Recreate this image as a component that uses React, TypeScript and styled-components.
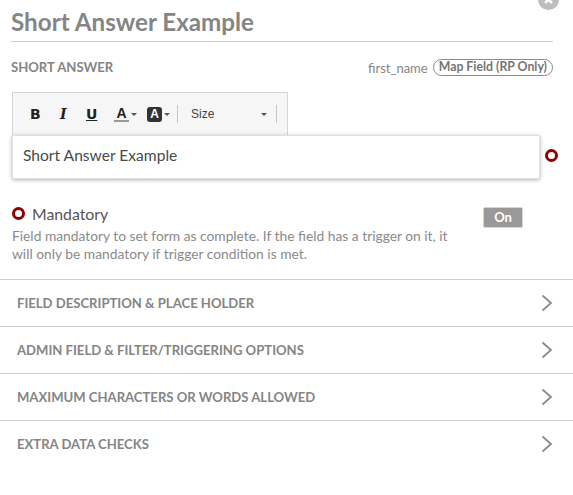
import React from "react";
import styled, { createGlobalStyle } from "styled-components";

const Global = createGlobalStyle`
  html, body { margin: 0; padding: 0; background: #fff; }
  body { font-family: Lato, "Liberation Sans", sans-serif; width: 573px; height: 495px; overflow: hidden; }
`;
const Page = styled.div`
  position: relative;
  width: 573px;
  height: 495px;
  overflow: hidden;
  background: #fff;
`;
const Close = styled.div`
  position: absolute;
  left: 538px;
  top: -11px;
  width: 21px;
  height: 21px;
  border-radius: 50%;
  background: #bdbdbd;
  display: flex;
  align-items: center;
  justify-content: center;
`;
const Header = styled.div`
  margin: 0 20px 0 11px;
  height: 42px;
  box-sizing: border-box;
  border-bottom: 1px solid #d0d0d0;
  display: flex;
  align-items: flex-start;
`;
const Title = styled.h1`
  margin: 0;
  padding-top: 7px;
  font-size: 24.2px;
  line-height: 30px;
  font-weight: 700;
  color: #858585;
`;
const MetaRow = styled.div`
  margin: 0 20px 0 11px;
  height: 50px;
  display: flex;
  align-items: center;
  justify-content: space-between;
`;
const TypeLabel = styled.span`
  font-size: 13.1px;
  font-weight: 700;
  color: #858585;
`;
const MapGroup = styled.div`
  display: flex;
  align-items: center;
  gap: 5px;
`;
const FieldName = styled.span`
  font-size: 13px;
  color: #858585;
  position: relative;
  top: 1px;
`;
const Pill = styled.span`
  height: 17px;
  line-height: 14px;
  box-sizing: border-box;
  padding: 0 5px;
  border: 1px solid #8a8a8a;
  border-radius: 9px;
  font-size: 12.3px;
  font-weight: 700;
  color: #757575;
`;
const Toolbar = styled.div`
  box-sizing: border-box;
  margin-left: 12px;
  width: 276px;
  height: 43px;
  background: #f6f6f6;
  border: 1px solid #d4d4d4;
  border-bottom: 0;
  display: flex;
  align-items: center;
  padding-left: 17px;
  font-family: "Liberation Sans", Arial, sans-serif;
`;
const ToolButton = styled.span<{ $w: number }>`
  width: ${(p) => p.$w}px;
  display: flex;
  align-items: center;
  color: #222;
`;
const Glyph = styled.span<{ $italic?: boolean; $underline?: boolean }>`
  font-family: "DejaVu Sans", sans-serif;
  font-size: 14px;
  font-weight: 700;
  line-height: 18px;
  font-style: ${(p) => (p.$italic ? "italic" : "normal")};
  text-decoration: ${(p) => (p.$underline ? "underline" : "none")};
`;
const ItalicGlyph = styled(Glyph)`
  position: relative;
  left: 2px;
  font-family: "DejaVu Serif", serif;
`;
const ColorA = styled.span`
  font-size: 14px;
  font-weight: 700;
  line-height: 14px;
  width: 15px;
  text-align: center;
  border-bottom: 2px solid #999;
  color: #222;
`;
const BackA = styled.span`
  width: 15px;
  height: 15px;
  background: #333;
  border-radius: 3px;
  color: #fff;
  font-size: 12px;
  font-weight: 700;
  line-height: 15px;
  text-align: center;
`;
const Caret = styled.span`
  width: 0;
  height: 0;
  margin-left: 2px;
  border-left: 3px solid transparent;
  border-right: 3px solid transparent;
  border-top: 3px solid #555;
`;
const Sep = styled.span`
  width: 1px;
  height: 18px;
  background: #c8c8c8;
`;
const SizeSelect = styled.span`
  box-sizing: border-box;
  width: 98px;
  padding: 0 9px 0 13px;
  display: flex;
  align-items: center;
  justify-content: space-between;
  font-size: 12px;
  color: #444;
`;
const InputRow = styled.div`
  margin-left: 12px;
  display: flex;
  align-items: flex-start;
  gap: 5px;
`;
const Input = styled.div`
  box-sizing: border-box;
  width: 528px;
  height: 44px;
  padding: 0 0 5px 10px;
  display: flex;
  align-items: center;
  background: #fff;
  border: 1px solid #e0e0e0;
  box-shadow: 0 1px 4px rgba(0, 0, 0, 0.3);
  font-size: 15.6px;
  color: #4a4a4a;
`;
const Radio = styled.span`
  box-sizing: border-box;
  flex: none;
  width: 13px;
  height: 13px;
  border-radius: 50%;
  border: 3px solid #8b0000;
  background: #fff;
`;
const InputRadio = styled(Radio)`
  margin-top: 14px;
`;
const MandatoryBlock = styled.div`
  margin: 23px 0 0 12px;
  height: 77px;
  width: 511px;
`;
const MandatoryHead = styled.div`
  height: 22px;
  display: flex;
  align-items: center;
  gap: 7px;
`;
const MandatoryLabel = styled.span`
  flex: 1;
  font-size: 15.8px;
  color: #555;
`;
const Toggle = styled.span`
  box-sizing: border-box;
  width: 40px;
  height: 21px;
  border-radius: 2px;
  border: 1px solid #d4d4d4;
  background: #999;
  color: #fff;
  font-size: 13px;
  font-weight: 700;
  line-height: 19px;
  text-align: center;
  position: relative;
  top: 4px;
`;
const Help = styled.p`
  margin: 3px 0 0;
  width: 450px;
  font-size: 13.8px;
  line-height: 18px;
  color: #8a8a8a;
`;
const Row = styled.div`
  box-sizing: border-box;
  height: 47px;
  padding: 0 20px 0 17px;
  border-top: 1px solid #cfcfcf;
  display: flex;
  align-items: center;
  justify-content: space-between;
  font-size: 13.1px;
  font-weight: 700;
  color: #858585;
`;
const Sections = styled.div`
  margin-top: 0;
`;

const rows = [
  "FIELD DESCRIPTION & PLACE HOLDER",
  "ADMIN FIELD & FILTER/TRIGGERING OPTIONS",
  "MAXIMUM CHARACTERS OR WORDS ALLOWED",
  "EXTRA DATA CHECKS",
];

const Chevron = () => (
  <svg width="12" height="18" viewBox="0 0 12 18" fill="none">
    <path d="M1.5 1.5 L10 9 L1.5 16.5" stroke="#8a8a8a" strokeWidth="1.8" />
  </svg>
);

export default function App() {
  return (
    <Page>
      <Global />
      <Close>
        <svg width="11" height="11" viewBox="0 0 11 11">
          <path d="M2 2 L9 9 M9 2 L2 9" stroke="#fff" strokeWidth="2.5" />
        </svg>
      </Close>
      <Header>
        <Title>Short Answer Example</Title>
      </Header>
      <MetaRow>
        <TypeLabel>SHORT ANSWER</TypeLabel>
        <MapGroup>
          <FieldName>first_name</FieldName>
          <Pill>Map Field (RP Only)</Pill>
        </MapGroup>
      </MetaRow>
      <Toolbar>
        <ToolButton $w={28}><Glyph>B</Glyph></ToolButton>
        <ToolButton $w={28}><ItalicGlyph $italic>I</ItalicGlyph></ToolButton>
        <ToolButton $w={28}><Glyph $underline>U</Glyph></ToolButton>
        <ToolButton $w={33}><ColorA>A</ColorA><Caret /></ToolButton>
        <ToolButton $w={30}><BackA>A</BackA><Caret /></ToolButton>
        <Sep />
        <SizeSelect>Size<Caret /></SizeSelect>
        <Sep />
      </Toolbar>
      <InputRow>
        <Input>Short Answer Example</Input>
        <InputRadio />
      </InputRow>
      <MandatoryBlock>
        <MandatoryHead>
          <Radio />
          <MandatoryLabel>Mandatory</MandatoryLabel>
          <Toggle>On</Toggle>
        </MandatoryHead>
        <Help>
          Field mandatory to set form as complete. If the field has a trigger on it, it will only be mandatory if trigger condition is met.
        </Help>
      </MandatoryBlock>
      <Sections>
        {rows.map((r) => (
          <Row key={r}>
            {r}
            <Chevron />
          </Row>
        ))}
      </Sections>
    </Page>
  );
}
